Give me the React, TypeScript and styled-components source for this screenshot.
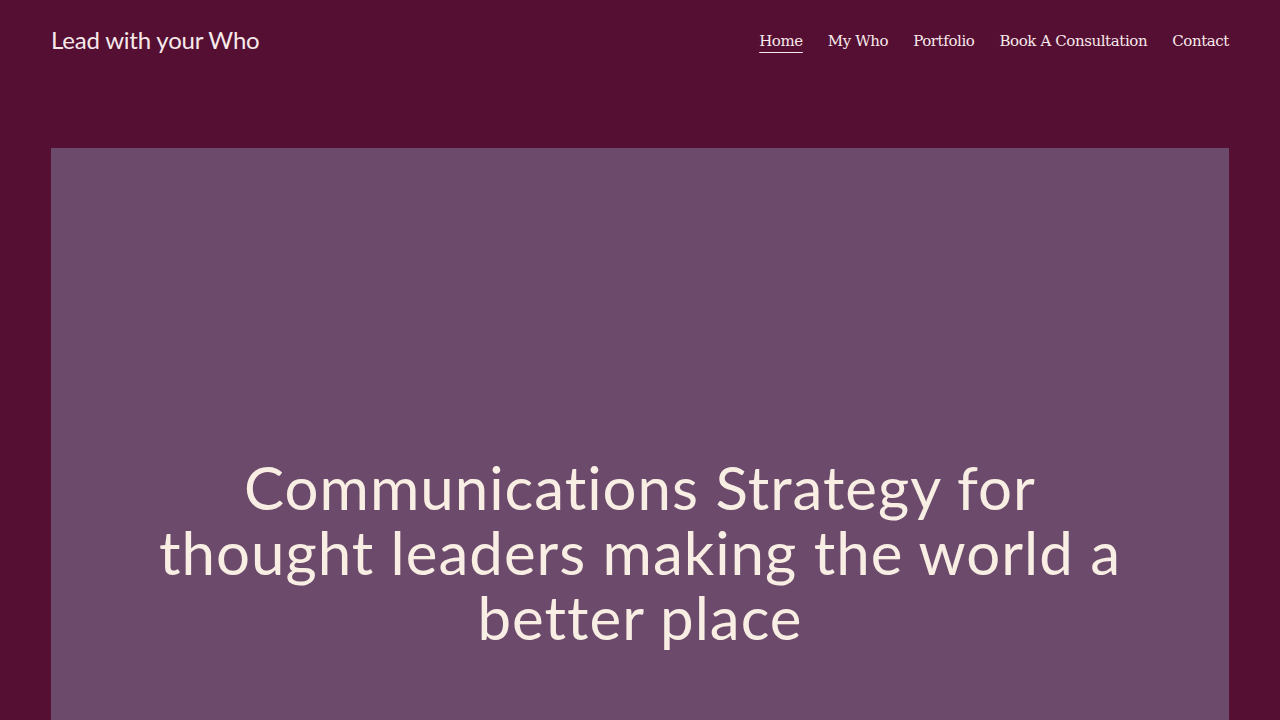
import styled, { createGlobalStyle } from 'styled-components';

const GlobalStyle = createGlobalStyle`
  html, body {
    margin: 0;
    padding: 0;
    background: #550f33;
  }
  * {
    box-sizing: border-box;
  }
`;

const Page = styled.div`
  height: 720px;
  background: #550f33;
  padding: 0 51px;
  overflow: hidden;
`;

const Header = styled.header`
  height: 148px;
  display: flex;
  align-items: flex-start;
  justify-content: space-between;
  padding-top: 24px;
`;

const Logo = styled.a`
  font-family: Lato, "Noto Sans", sans-serif;
  font-size: 24px;
  letter-spacing: -0.2px;
  color: #f7e9ea;
  text-decoration: none;
  line-height: 32px;
`;

const Nav = styled.nav`
  display: flex;
  gap: 25px;
  padding-top: 6px;
`;

const NavLink = styled.a<{ $active?: boolean }>`
  font-family: "DejaVu Serif", "Liberation Serif", serif;
  font-size: 15px;
  letter-spacing: -0.4px;
  color: #f7e9ea;
  text-decoration: ${(p) => (p.$active ? 'underline' : 'none')};
  text-underline-offset: 6px;
  text-decoration-thickness: 1px;
  line-height: 22px;
`;

const Hero = styled.section`
  background: #6c4a6b;
  height: 640px;
  display: flex;
  flex-direction: column;
  justify-content: flex-end;
  align-items: center;
  padding-bottom: 138px;
`;

const Headline = styled.h1`
  margin: 0;
  font-family: Lato, "Noto Sans", sans-serif;
  font-weight: 400;
  font-size: 60px;
  line-height: 65px;
  letter-spacing: 1px;
  font-variant-ligatures: none;
  color: #f8eee3;
  text-align: center;
  max-width: 1010px;
`;

const links = ['Home', 'My Who', 'Portfolio', 'Book A Consultation', 'Contact'];

export default function App() {
  return (
    <>
      <GlobalStyle />
      <Page>
        <Header>
          <Logo href="#">Lead with your Who</Logo>
          <Nav>
            {links.map((l, i) => (
              <NavLink key={l} href="#" $active={i === 0}>
                {l}
              </NavLink>
            ))}
          </Nav>
        </Header>
        <Hero>
          <Headline>
            Communications Strategy for thought leaders making the world a better place
          </Headline>
        </Hero>
      </Page>
    </>
  );
}
